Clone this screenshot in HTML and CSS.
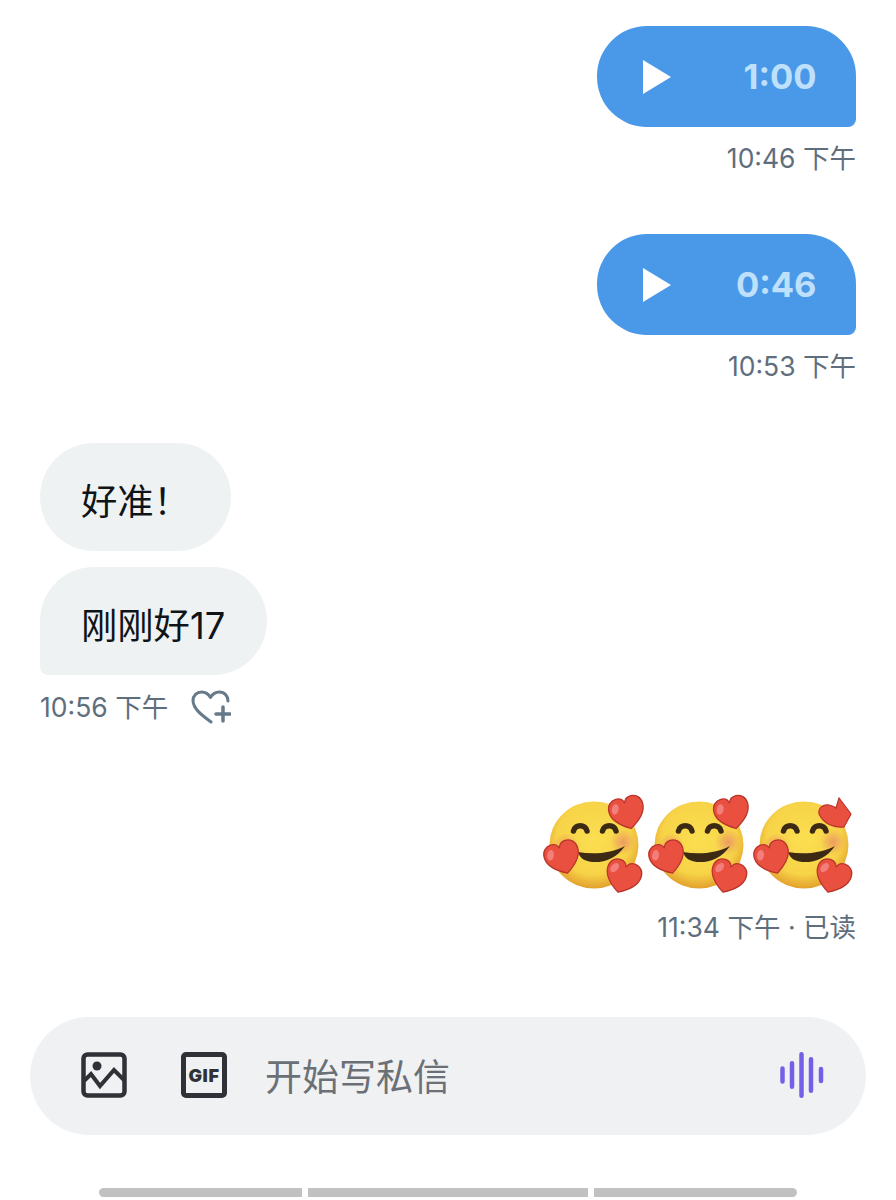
FILE: index.html
```html
<!DOCTYPE html>
<html lang="zh">
<head>
<meta charset="utf-8">
<title>私信</title>
<link rel="stylesheet" href="styles.css">
</head>
<body>
<svg class="defs" aria-hidden="true">
  <defs>
    <radialGradient id="face" cx="50%" cy="42%" r="58%">
      <stop offset="0" stop-color="#fbdf50"/>
      <stop offset="0.72" stop-color="#f7d348"/>
      <stop offset="1" stop-color="#e3a02c"/>
    </radialGradient>
    <radialGradient id="blush">
      <stop offset="0" stop-color="#e8846a" stop-opacity=".7"/>
      <stop offset="1" stop-color="#e8846a" stop-opacity="0"/>
    </radialGradient>
    <path id="heart" d="M0 17C-7 13-18 6-18-5C-18-12-13-16-8-16C-4-16-1-14 0-10C1-14 4-16 8-16C13-16 18-12 18-5C18 6 7 13 0 17Z"/>
    <g id="heartfull">
      <use href="#heart" fill="#e9503f" stroke="#b9342a" stroke-width="1.300"/>
      <ellipse cx="-11" cy="-6" rx="3.500" ry="5.500" fill="#f27f7c" transform="rotate(25 -11 -6)"/>
    </g>
    <symbol id="emoji" viewBox="0 0 100 100" overflow="visible">
      <ellipse cx="48" cy="50" rx="44.500" ry="43.500" fill="url(#face)"/>
      <circle cx="20" cy="51" r="13" fill="url(#blush)"/>
      <circle cx="77" cy="47" r="13" fill="url(#blush)"/>
      <path d="M27.500 36C29 29 39.500 29 41 36M56.500 36C58 29 68.500 29 70 36" fill="none" stroke="#3c2a14" stroke-width="5.500" stroke-linecap="round"/>
      <path d="M32 57C48 60 66 58 79 51C71 63 58 68 46 67C38 66 34 63 32 57Z" fill="#3c2a14"/>
      <use href="#heartfull" transform="translate(16.500 62.500) rotate(-18) scale(.97)"/>
      <use href="#heartfull" transform="translate(77 81.500) rotate(18) scale(.97)"/>
    </symbol>
  </defs>
</svg>

<main class="thread">
  <section class="group out first">
    <div class="voice">
      <svg class="play" viewBox="0 0 28 34"><path d="M0 0L28 17L0 34Z"/></svg>
      <span class="dur">1:00</span>
    </div>
    <p class="meta">10:46 下午</p>
  </section>

  <section class="group out second">
    <div class="voice">
      <svg class="play" viewBox="0 0 28 34"><path d="M0 0L28 17L0 34Z"/></svg>
      <span class="dur">0:46</span>
    </div>
    <p class="meta">10:53 下午</p>
  </section>

  <section class="group in">
    <div class="bubble top">好准！</div>
    <div class="bubble last">刚刚好17</div>
    <div class="meta-row">
      <p class="meta">10:56 下午</p>
      <svg class="react" viewBox="0 0 40 34" fill="none" stroke="#667a8a" stroke-width="3" stroke-linecap="round" stroke-linejoin="round">
        <path d="M20 32C12 26 2 19 2 10.500C2 5.500 6 2 10.500 2C14.500 2 17.500 4 19.500 7.500C21.500 4 24.500 2 28.500 2C33.500 2 37 6 37 11"/>
        <path d="M32 17V31M25 24H39" stroke-width="3.500"/>
      </svg>
    </div>
  </section>

  <section class="group out emoji-group">
    <div class="emojis" role="img" aria-label="🥰🥰🥰">
      <svg class="emoji" viewBox="0 0 100 100">
        <use href="#emoji" width="100" height="100"/>
        <use href="#heartfull" transform="translate(81 17.500) rotate(-14) scale(.97)"/>
      </svg>
      <svg class="emoji" viewBox="0 0 100 100">
        <use href="#emoji" width="100" height="100"/>
        <use href="#heartfull" transform="translate(81 17.500) rotate(-14) scale(.97)"/>
      </svg>
      <svg class="emoji" viewBox="0 0 100 100">
        <use href="#emoji" width="100" height="100"/>
        <path d="M63 19C62 13 67 9 73 10C77 11 79 12 80 13L83 3L95 19L88 32C80 33 68 30 63 19Z" fill="#e9503f" stroke="#b9342a" stroke-width="1.200"/>
      </svg>
    </div>
    <p class="meta">11:34 下午 · 已读</p>
  </section>
</main>

<div class="composer">
  <svg class="tool" viewBox="0 0 46 46">
    <rect x="2.500" y="2.500" width="41" height="41" rx="4" fill="none" stroke="#2f3136" stroke-width="4.500"/>
    <circle cx="16" cy="14" r="4.500" fill="#2f3136"/>
    <path d="M3 29L10 22L19 34L33 18L44 29" fill="none" stroke="#2f3136" stroke-width="4"/>
  </svg>
  <div class="tool gif">GIF</div>
  <span class="placeholder">开始写私信</span>
  <svg class="wave" viewBox="0 0 44 46" fill="none" stroke="#7360e6" stroke-width="4.500" stroke-linecap="round">
    <path d="M2.500 16.500V29.500M12 11.250V34.750M21.500 2.250V43.750M31 7.250V38.750M41 17V29"/>
  </svg>
</div>

<div class="handle">
  <span class="seg seg-a"></span>
  <span class="seg seg-b"></span>
  <span class="seg seg-c"></span>
</div>
</body>
</html>
```

FILE: styles.css
```css
* { box-sizing: border-box; }

html, body {
  margin: 0;
  background: #fff;
}

body {
  width: 896px;
  height: 1200px;
  overflow: hidden;
  font-family: Inter, "Noto Sans CJK SC", sans-serif;
}

.defs {
  position: absolute;
  width: 0;
  height: 0;
}

.thread {
  display: flex;
  flex-direction: column;
  padding: 26px 40px 0;
  height: 1017px;
}

.group {
  display: flex;
  flex-direction: column;
}

.out { align-items: flex-end; }
.in { align-items: flex-start; }

.second { margin-top: 60px; }
.in { margin-top: 61px; }
.emoji-group { margin-top: 71px; }

.voice {
  width: 259px;
  height: 101px;
  display: flex;
  align-items: center;
  justify-content: space-between;
  padding: 0 39.500px 0 46px;
  background: #4a99e9;
  border-radius: 50px 50px 8px 50px;
}

.play {
  width: 28px;
  height: 34px;
  fill: #fff;
}

.dur {
  font-size: 34.500px;
  font-weight: 700;
  color: #bfe0fb;
}

.meta {
  margin: 15px 0 0;
  font-size: 26.500px;
  line-height: 32px;
  color: #5e6e7d;
}

.bubble {
  height: 108px;
  display: flex;
  align-items: center;
  padding: 3px 41px 0;
  font-size: 36.300px;
  color: #0f1419;
  background: #eff2f3;
}

.top {
  border-radius: 54px;
  margin-bottom: 16px;
}

.last {
  border-radius: 54px 54px 54px 8px;
  width: 227px;
}

.meta-row {
  display: flex;
  align-items: center;
  gap: 23px;
}

.react {
  width: 40px;
  height: 34px;
  margin-top: 15px;
}

.emojis {
  display: flex;
  gap: 5px;
}

.emoji {
  width: 100px;
  height: 100px;
  display: block;
  overflow: visible;
}

.emoji-group .meta {
  margin-top: 16px;
}

.composer {
  margin: 0 30px;
  height: 118px;
  display: flex;
  align-items: center;
  padding: 0 42px 2px 50.500px;
  background: #f0f1f3;
  border-radius: 59px;
}

.tool {
  width: 46px;
  height: 46px;
  flex: none;
}

.gif {
  margin-left: 54.500px;
  border: 5px solid #2f3136;
  border-radius: 5px;
  display: flex;
  align-items: center;
  justify-content: center;
  font-size: 18px;
  font-weight: 900;
  letter-spacing: 0.6px;
  color: #2f3136;
}

.placeholder {
  margin-left: 38px;
  flex: 1;
  font-size: 37px;
  color: #6b7076;
}

.wave {
  width: 44px;
  height: 46px;
}

.handle {
  display: flex;
  gap: 6px;
  margin: 53px 0 0 99px;
}

.seg {
  height: 9px;
  background: #c1c1c1;
}

.seg-a { width: 203px; border-radius: 5px 0 0 5px; }
.seg-b { width: 280px; }
.seg-c { width: 203px; border-radius: 0 5px 5px 0; }
```
